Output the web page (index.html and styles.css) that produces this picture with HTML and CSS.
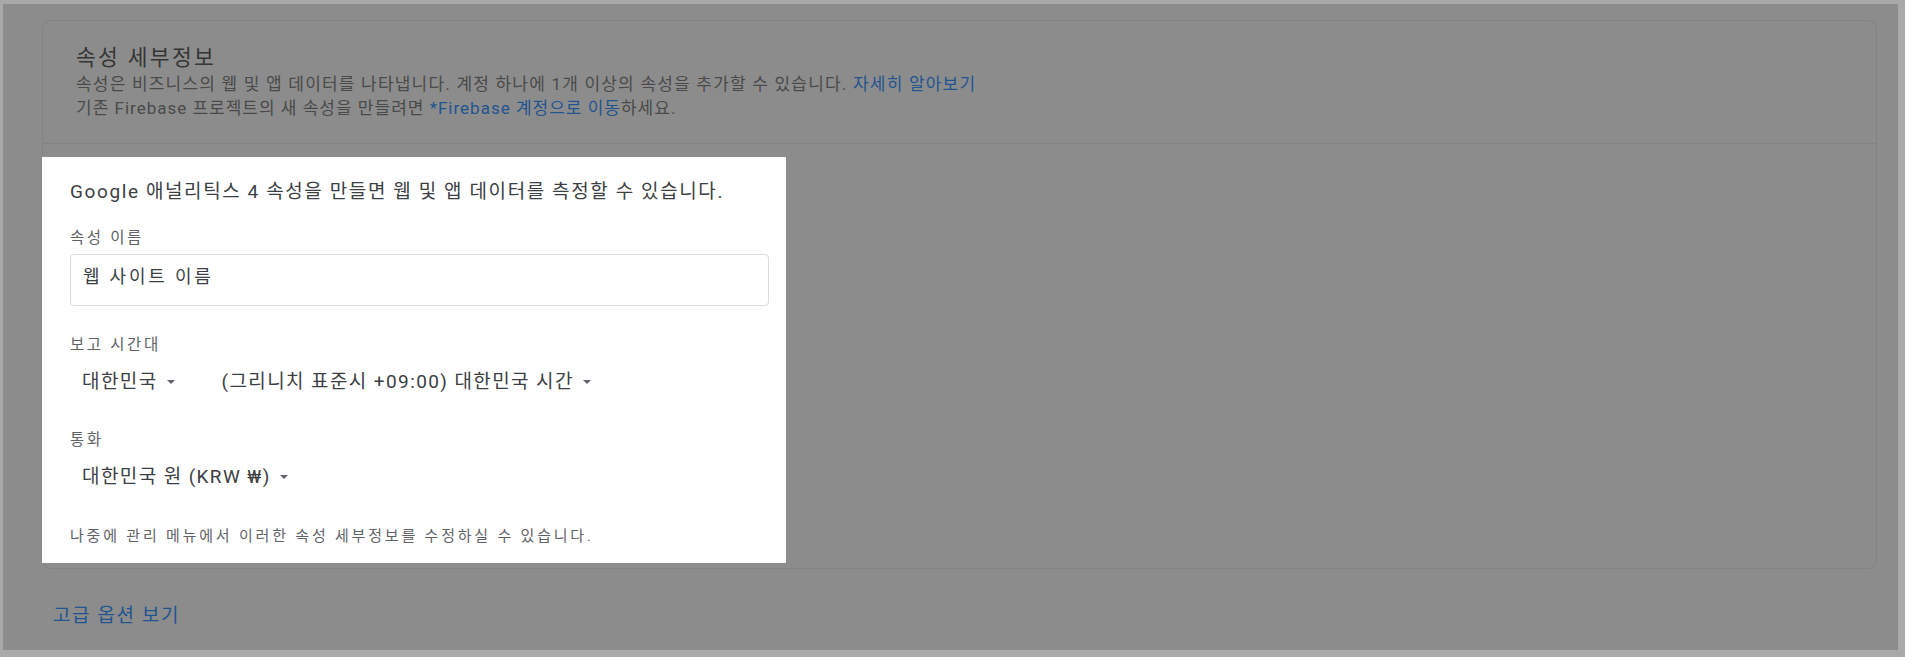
FILE: index.html
```html
<!DOCTYPE html>
<html lang="ko">
<head>
<meta charset="utf-8">
<title>속성 세부정보</title>
<link rel="stylesheet" href="styles.css">
</head>
<body>
<div class="frame">
  <section class="card">
    <header class="card-head">
      <h2 class="title">속성 세부정보</h2>
      <p class="desc">속성은 비즈니스의 웹 및 앱 데이터를 나타냅니다. 계정 하나에 1개 이상의 속성을 추가할 수 있습니다. <a class="link">자세히 알아보기</a></p>
      <p class="desc desc-2">기존 Firebase 프로젝트의 새 속성을 만들려면 <a class="link">*Firebase 계정으로 이동</a>하세요.</p>
    </header>
    <div class="card-body">
      <div class="panel">
        <p class="intro">Google 애널리틱스 4 속성을 만들면 웹 및 앱 데이터를 측정할 수 있습니다.</p>
        <label class="label label-name">속성 이름</label>
        <div class="input">웹 사이트 이름</div>
        <label class="label label-tz">보고 시간대</label>
        <div class="selects">
          <span class="select">대한민국<i class="caret"></i></span>
          <span class="select select-tz">(그리니치 표준시 +09:00) 대한민국 시간<i class="caret"></i></span>
        </div>
        <label class="label label-cur">통화</label>
        <div class="selects">
          <span class="select">대한민국 원 (KRW ₩)<i class="caret"></i></span>
        </div>
        <p class="note">나중에 관리 메뉴에서 이러한 속성 세부정보를 수정하실 수 있습니다.</p>
      </div>
    </div>
  </section>
  <a class="advanced">고급 옵션 보기</a>
</div>
</body>
</html>
```

FILE: styles.css
```css
html, body {
  margin: 0;
  padding: 0;
}
body {
  background: #a9a9a9;
  font-family: "Roboto", "Noto Sans CJK KR", sans-serif;
  width: 1905px;
  height: 657px;
  overflow: hidden;
}
.frame {
  margin: 4px 7px 0 3px;
  height: 646px;
  background: #8c8c8c;
  box-sizing: border-box;
  padding: 16px 21px 0 39px;
}
.card {
  border: 1px solid #838383;
  border-radius: 9px;
}
.card-head {
  padding: 23px 32px 23px 33px;
  border-bottom: 1px solid #838383;
}
.title {
  margin: 0;
  font-weight: 400;
  font-size: 21.5px;
  line-height: 28px;
  letter-spacing: 2.3px;
  color: #363636;
}
.desc {
  margin: 0;
  font-size: 17px;
  line-height: 24px;
  letter-spacing: 1.2px;
  color: #4a4a4a;
}
.desc-2 {
  letter-spacing: 1px;
}
.link {
  color: #24548f;
}
.card-body {
  padding: 13px 0 5px 0;
}
.panel {
  display: flex;
  flex-direction: column;
  margin-left: -1px;
  width: 744px;
  background: #ffffff;
  box-sizing: border-box;
  padding: 22px 17px 17px 28px;
}
.intro {
  margin: 0 0 23px 0;
  font-size: 19px;
  line-height: 26px;
  letter-spacing: 1.6px;
  color: #3c4043;
}
.label {
  display: block;
  font-size: 15.5px;
  line-height: 20px;
  color: #5f6368;
  letter-spacing: 2.6px;
  margin-bottom: 7px;
}
.label-name {
  margin-bottom: 6px;
}
.input {
  display: flex;
  align-items: center;
  height: 52px;
  box-sizing: border-box;
  border: 1px solid #dadce0;
  border-radius: 4px;
  padding: 0 12px 6px 12px;
  font-size: 18px;
  line-height: 24px;
  letter-spacing: 2.8px;
  color: #3c4043;
}
.label-tz {
  margin-top: 29px;
}
.label-cur {
  margin-top: 31px;
}
.selects {
  display: flex;
  margin-top: 3px;
  padding-left: 12px;
  height: 34px;
  align-items: center;
}
.select {
  display: inline-flex;
  align-items: center;
  font-size: 19px;
  line-height: 26px;
  letter-spacing: 1.4px;
  color: #3c4043;
}
.select-tz {
  margin-left: 47px;
}
.caret {
  display: inline-block;
  width: 0;
  height: 0;
  margin-left: 9px;
  border-left: 4.5px solid transparent;
  border-right: 4.5px solid transparent;
  border-top: 4.5px solid #5f6368;
}
.note {
  margin: 32px 0 0 0;
  font-size: 15px;
  line-height: 20px;
  color: #5f6368;
  letter-spacing: 2.8px;
}
.advanced {
  display: block;
  margin: 35px 0 0 11px;
  font-size: 19px;
  line-height: 24px;
  letter-spacing: 1.6px;
  color: #24548f;
}
```
